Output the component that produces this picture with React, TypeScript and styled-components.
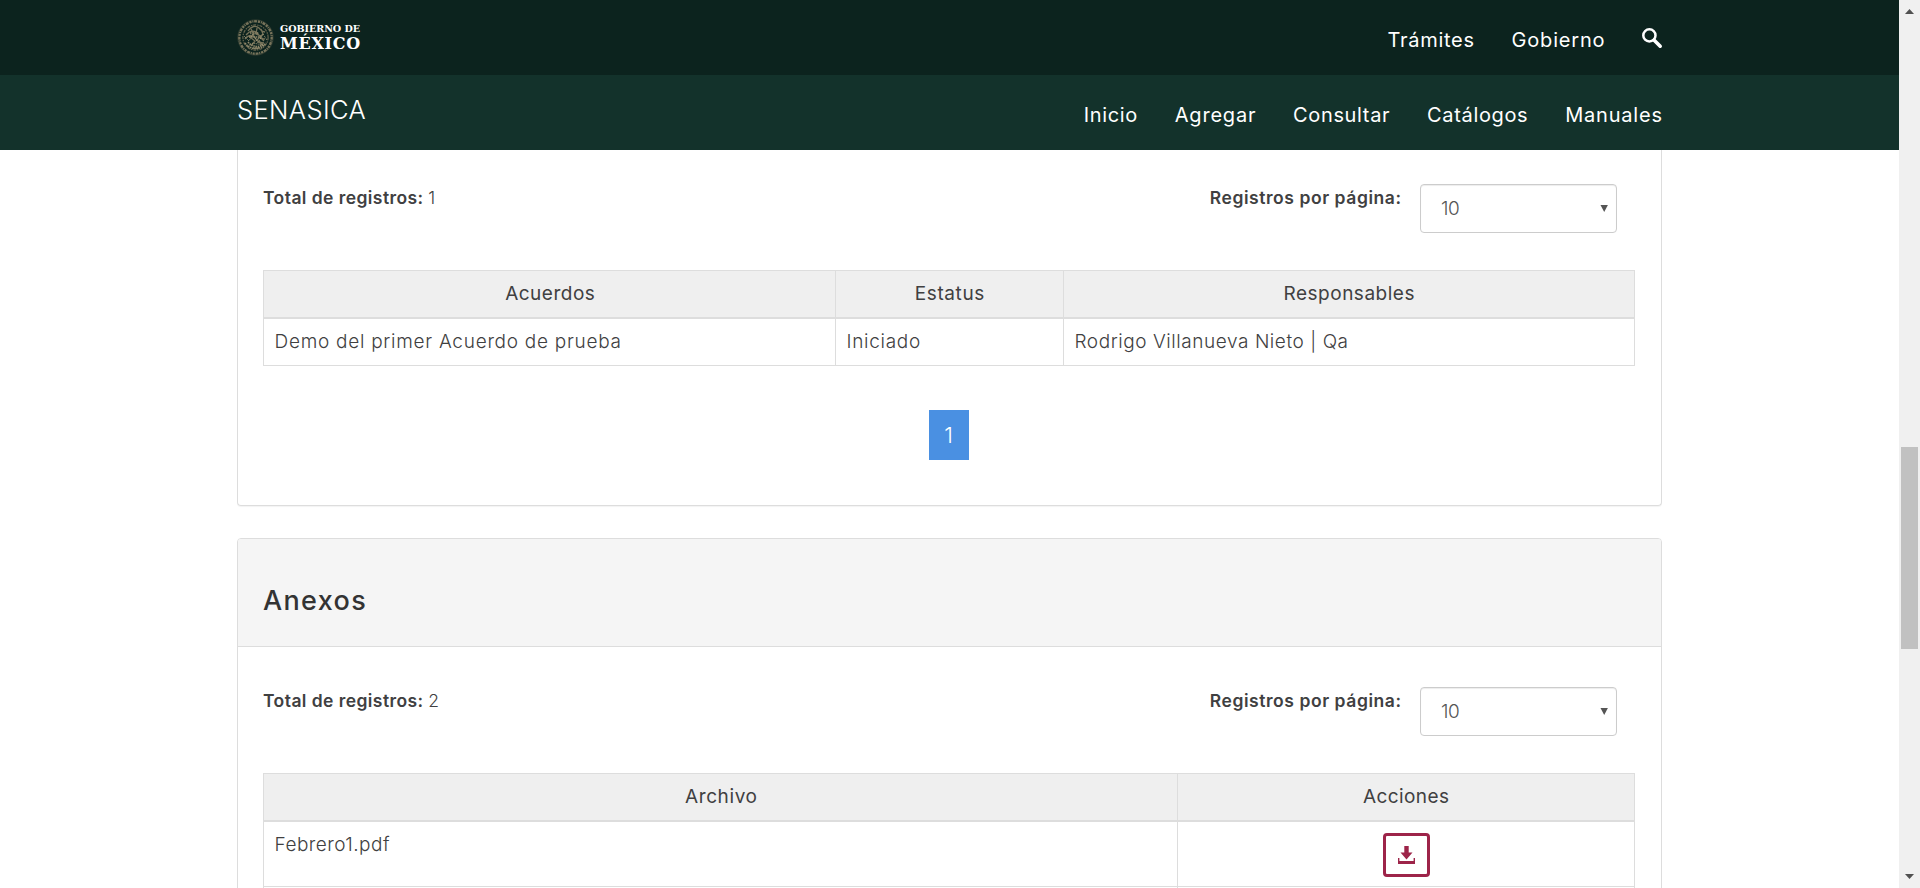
import React from "react";
import styled, { createGlobalStyle } from "styled-components";

const GlobalStyle = createGlobalStyle`
  *, *::before, *::after { box-sizing: border-box; }
  body {
    margin: 0;
    overflow: hidden;
    background: #fff;
    color: #404041;
    font-family: Inter, "Open Sans", sans-serif;
    font-size: 19px;
    font-weight: 300;
  }
`;

const Window = styled.div`
  display: flex;
  height: 888px;
  overflow: hidden;
`;

const Page = styled.div`
  flex: 1;
  display: flex;
  flex-direction: column;
  min-width: 0;
`;

const Bar = styled.header<{ $bg: string }>`
  flex: none;
  height: 75px;
  background: ${(p) => p.$bg};
  color: #fff;
`;

const Container = styled.div`
  width: 1425px;
  height: 100%;
  margin: 0 auto;
  display: flex;
  justify-content: space-between;
`;

const Nav = styled.nav`
  display: flex;
  align-items: center;
  gap: 37.5px;
  height: 75px;
  padding-top: 4px;
`;

/* Tracked text whose trailing letter gap does not take part in the layout. */
const Tracked = styled.span<{ $ls?: number }>`
  letter-spacing: ${(p) => p.$ls ?? 0}px;
  margin-right: ${(p) => -(p.$ls ?? 0)}px;
  white-space: nowrap;
`;

const NavLink = styled(Tracked).attrs({ as: "a" })`
  font-size: 20px;
  font-weight: 400;
  line-height: 28px;
`;

const SiteName = styled(Tracked)`
  font-size: 25.5px;
  line-height: 70px;
  font-weight: 350;
`;

const Logo = styled.div`
  display: flex;
  align-items: flex-start;
  gap: 6px;
  padding-top: 19px;
`;

const LogoWords = styled.div`
  display: flex;
  flex-direction: column;
  font-family: "DejaVu Serif", serif;
  font-weight: 700;
`;

const LogoSmall = styled(Tracked)`
  font-size: 9.6px;
  line-height: 12px;
  padding-top: 3.5px;
`;

const LogoBig = styled(Tracked)`
  font-size: 16px;
  line-height: 17px;
`;

const SearchIcon = styled.svg`
  width: 21px;
  height: 21px;
  margin: 0 -1px 3px 0;
`;

const Content = styled.main`
  flex: 1;
  min-height: 0;
  overflow: hidden;
  width: 1425px;
  margin: 0 auto;
`;

const Card = styled.section<{ $cut?: boolean }>`
  border: 1px solid #ddd;
  border-top-width: ${(p) => (p.$cut ? 0 : 1)}px;
  border-radius: ${(p) => (p.$cut ? "0 0 4px 4px" : "4px")};
  box-shadow: 0 1px 1px rgba(0, 0, 0, 0.05);
  margin-bottom: 32px;
`;

const CardHeader = styled.div`
  height: 108px;
  padding: 47px 25px 0;
  background: #f5f5f5;
  border-bottom: 1px solid #ddd;
  border-radius: 3px 3px 0 0;
`;

const CardTitle = styled.h3`
  margin: 0;
  font-size: 27px;
  line-height: 30px;
  font-weight: 550;
  letter-spacing: 1.35px;
  color: #333;
`;

const CardBody = styled.div<{ $top: number; $bottom?: number }>`
  padding: ${(p) => p.$top}px 26px ${(p) => p.$bottom ?? 0}px 25px;
`;

const Toolbar = styled.div`
  display: flex;
  align-items: flex-start;
  height: 86px;
  padding-right: 18px;
  font-size: 17.5px;
  line-height: 27px;
`;

const Total = styled.div`
  flex: 1;
  display: flex;
  gap: 5px;
`;

const Strong = styled(Tracked)`
  font-weight: 600;
`;

const Select = styled.div`
  display: flex;
  align-items: center;
  justify-content: space-between;
  width: 197px;
  height: 49px;
  margin-left: 19px;
  padding: 0 8px 1px 20px;
  border: 1px solid #ccc;
  border-radius: 4px;
  box-shadow: inset 0 1px 1px rgba(0, 0, 0, 0.075);
  font-size: 19px;
  color: #555;
`;

const Caret = styled.svg`
  width: 8px;
  height: 7px;
`;

const Table = styled.div<{ $cols: string }>`
  display: grid;
  grid-template-columns: ${(p) => p.$cols};
  border: 1px solid #ddd;
  border-bottom: 0;
`;

const HeadCell = styled.div`
  display: flex;
  align-items: center;
  justify-content: center;
  height: 48px;
  padding: 0 0 1px 1px;
  background: #efefef;
  border-bottom: 2px solid #ddd;
  font-weight: 420;
  & + & { box-shadow: inset 1px 0 #ddd; }
`;

const Cell = styled.div<{ $h?: number; $divided?: boolean; $center?: boolean }>`
  display: flex;
  justify-content: ${(p) => (p.$center ? "center" : "flex-start")};
  height: ${(p) => p.$h ?? 47}px;
  padding: ${(p) => (p.$center ? "11px 0 0" : p.$divided ? "9px 0 0 11.5px" : "9px 0 0 10.5px")};
  line-height: 28px;
  border-bottom: 1px solid #ddd;
  box-shadow: ${(p) => (p.$divided ? "inset 1px 0 #ddd" : "none")};
`;

const Pager = styled.div`
  display: flex;
  justify-content: center;
  padding: 44px 0 45px;
`;

const PageButton = styled.button`
  width: 40px;
  height: 50px;
  padding: 0 1px 0 0;
  border: 0;
  background: #4a90e2;
  color: #fff;
  font: 350 22px/50px Inter, sans-serif;
`;

const ActionButton = styled.button`
  display: flex;
  align-items: center;
  justify-content: center;
  width: 47px;
  height: 44px;
  margin-left: 1px;
  padding: 0 0 0 1px;
  background: #fff;
  border: 3px solid #9d2449;
  border-radius: 4px;
`;

const DownloadIcon = styled.svg`
  width: 17px;
  height: 18px;
  fill: #9d2449;
`;

const Scrollbar = styled.aside`
  flex: none;
  display: flex;
  flex-direction: column;
  align-items: center;
  width: 21px;
  background: #f0f0f0;
`;

const ScrollArrow = styled.svg`
  flex: none;
  width: 9px;
  height: 5px;
  margin: 9px 0;
  fill: #505050;
`;

const Track = styled.div`
  flex: 1;
  padding-top: 424px;
`;

const Thumb = styled.div`
  width: 17px;
  height: 202px;
  background: #c1c1c1;
`;

function Emblem() {
  return (
    <svg width="37" height="37" viewBox="0 0 37 37" fill="none" stroke="#77735a">
      <circle cx="18.5" cy="18.5" r="16.2" strokeWidth="2.4" strokeDasharray="2.2 .8 1.1 .7 3 .9" />
      <circle cx="18.5" cy="18.5" r="17.7" strokeWidth=".4" stroke="#5f5f4b" />
      <circle cx="18.5" cy="18.5" r="12.6" strokeWidth="1.2" strokeDasharray="3 1 1.5 .8" stroke="#66644e" />
      <path strokeWidth="1.3" d="M11 12c3-5 8-6 11-3 2 2 3 4 6 4M9 16c4-5 9-5 12-1 2 3 4 5 7 5M8 20c4-5 8-4 10-1 3 4 6 5 9 5M14 10l3 5-4 3 5 4-4 5M20 9l-1 6 5 2-4 4 5 5M24 10l2 5-3 3 4 4" />
      <path strokeWidth="1.6" strokeDasharray="1.5 .7" d="M8 24c5 7 15 8 21 0M11 23c4 5 11 6 15 2M16 29h6M13 14h9M12 18h12" stroke="#8e876a" />
      <path strokeWidth="1" strokeDasharray="1 1" d="M7 17l5 5 4-7 5 9 5-9 4 6M10 28l6-4 5 1 7 2" stroke="#a39a7a" />
    </svg>
  );
}

const topLinks: [string, number][] = [["Trámites", 0.74], ["Gobierno", 0.8]];
const siteLinks: [string, number][] = [
  ["Inicio", 0.65], ["Agregar", 0.8], ["Consultar", 0.65], ["Catálogos", 0.65], ["Manuales", 0.8],
];

function ListToolbar({ total }: { total: number }) {
  return (
    <Toolbar>
      <Total>
        <Strong $ls={0.43}>Total de registros:</Strong>
        <span>{total}</span>
      </Total>
      <Strong $ls={0.56}>Registros por página:</Strong>
      <Select>
        <Tracked $ls={-0.4}>10</Tracked>
        <Caret viewBox="0 0 8 7" fill="#555"><path d="M.5 0h7.4L4.2 7z" /></Caret>
      </Select>
    </Toolbar>
  );
}

export default function App() {
  return (
    <>
      <GlobalStyle />
      <Window>
        <Page>
          <Bar $bg="#0c231e">
            <Container>
              <Logo>
                <Emblem />
                <LogoWords>
                  <LogoSmall $ls={-0.05}>GOBIERNO DE</LogoSmall>
                  <LogoBig $ls={0.75}>MÉXICO</LogoBig>
                </LogoWords>
              </Logo>
              <Nav>
                {topLinks.map(([label, ls]) => <NavLink key={label} $ls={ls}>{label}</NavLink>)}
                <SearchIcon viewBox="0 0 21 21" fill="none" stroke="#fff">
                  <circle cx="7.4" cy="7.4" r="6.1" strokeWidth="2.5" />
                  <path d="M12.2 12.2l6 6" strokeWidth="3.6" strokeLinecap="round" />
                </SearchIcon>
              </Nav>
            </Container>
          </Bar>
          <Bar $bg="#13322b">
            <Container>
              <SiteName $ls={0.4}>SENASICA</SiteName>
              <Nav>
                {siteLinks.map(([label, ls]) => <NavLink key={label} $ls={ls}>{label}</NavLink>)}
              </Nav>
            </Container>
          </Bar>
          <Content>
            <Card $cut>
              <CardBody $top={34}>
                <ListToolbar total={1} />
                <Table $cols="571px 228px 571px">
                  <HeadCell><Tracked $ls={0.5}>Acuerdos</Tracked></HeadCell>
                  <HeadCell><Tracked $ls={0.6}>Estatus</Tracked></HeadCell>
                  <HeadCell><Tracked $ls={0.5}>Responsables</Tracked></HeadCell>
                  <Cell><Tracked $ls={0.73}>Demo del primer Acuerdo de prueba</Tracked></Cell>
                  <Cell $divided><Tracked $ls={0.7}>Iniciado</Tracked></Cell>
                  <Cell $divided><Tracked $ls={0.56}>Rodrigo Villanueva Nieto | Qa</Tracked></Cell>
                </Table>
                <Pager><PageButton>1</PageButton></Pager>
              </CardBody>
            </Card>
            <Card>
              <CardHeader><CardTitle>Anexos</CardTitle></CardHeader>
              <CardBody $top={40}>
                <ListToolbar total={2} />
                <Table $cols="913px 457px">
                  <HeadCell><Tracked $ls={0.6}>Archivo</Tracked></HeadCell>
                  <HeadCell><Tracked $ls={0.4}>Acciones</Tracked></HeadCell>
                  <Cell $h={65}><Tracked $ls={0.47}>Febrero1.pdf</Tracked></Cell>
                  <Cell $h={65} $divided $center>
                    <ActionButton aria-label="Descargar">
                      <DownloadIcon viewBox="0 0 17 18">
                        <path d="M6.3 0h4.4v6.6h3.8L8.5 13.6 2.5 6.6h3.8z" />
                        <path d="M0 12h1.4v3h14.2v-3H17v6H0z" />
                      </DownloadIcon>
                    </ActionButton>
                  </Cell>
                  <Cell /><Cell $divided />
                </Table>
              </CardBody>
            </Card>
          </Content>
        </Page>
        <Scrollbar>
          <ScrollArrow viewBox="0 0 9 5"><path d="M0 5L4.5 0 9 5z" /></ScrollArrow>
          <Track><Thumb /></Track>
          <ScrollArrow viewBox="0 0 9 5"><path d="M0 0l4.5 5L9 0z" /></ScrollArrow>
        </Scrollbar>
      </Window>
    </>
  );
}
